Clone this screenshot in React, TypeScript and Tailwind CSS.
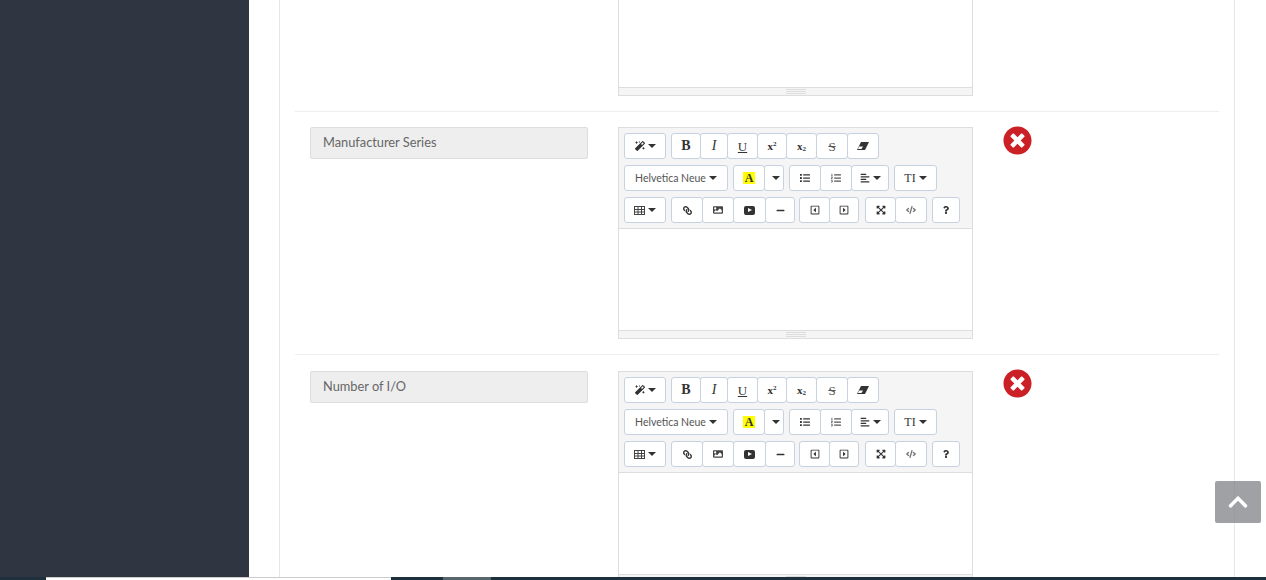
import type { ReactNode } from "react";
import {
  FaAlignLeft,
  FaChevronUp,
  FaCode,
  FaExpandArrowsAlt,
  FaImage,
  FaLink,
  FaList,
  FaListOl,
  FaMagic,
  FaMinus,
  FaQuestion,
  FaRegCaretSquareLeft,
  FaRegCaretSquareRight,
  FaTimesCircle,
} from "react-icons/fa";

function Caret() {
  return <span className="ml-[3px] inline-block border-x-[4px] border-t-[4px] border-x-transparent border-t-[#333]" />;
}

function Btn({ w, first, children }: { w: string; first?: boolean; children: ReactNode }) {
  return (
    <div
      className={`${w} ${first ? "" : "-ml-px"} flex h-[26px] shrink-0 items-center justify-center rounded-[3px] border border-[#c6d2e0] bg-white text-[#333]`}
    >
      {children}
    </div>
  );
}

function Serif({ className, children }: { className: string; children: ReactNode }) {
  return <span className={`font-['Liberation_Serif',serif] leading-none ${className}`}>{children}</span>;
}

function TableIcon() {
  return (
    <svg width="11" height="9" viewBox="0 0 11 9" fill="none" stroke="#444" strokeWidth="1">
      <rect x="0.5" y="0.5" width="10" height="8" />
      <path d="M0 3.5h11M0 6h11M4 0v9M7.5 0v9" />
    </svg>
  );
}

function EraserIcon() {
  return (
    <svg width="12" height="8" viewBox="0 0 12 8">
      <polygon points="4,0 12,0 8,8 0,8" fill="#333" />
      <polygon points="2,4.5 6,4.5 4.5,7 1,7" fill="#fff" />
    </svg>
  );
}

function Toolbar() {
  return (
    <div className="flex h-[101px] flex-col gap-[6px] border-b border-[#ddd] bg-[#f5f5f5] pl-[5px] pt-[5px]">
      <div className="flex">
        <Btn w="w-[42px]" first><FaMagic size={10} /><Caret /></Btn>
        <div className="ml-[5px] flex">
          <Btn w="w-[30px]" first><Serif className="text-[14px] font-bold">B</Serif></Btn>
          <Btn w="w-[28px]"><Serif className="text-[14px] italic">I</Serif></Btn>
          <Btn w="w-[31px]"><Serif className="text-[13px] underline">U</Serif></Btn>
          <Btn w="w-[30px]"><Serif className="text-[11px] font-bold">x<sup className="text-[7px]">2</sup></Serif></Btn>
          <Btn w="w-[31px]"><Serif className="text-[11px] font-bold">x<sub className="text-[7px]">2</sub></Serif></Btn>
          <Btn w="w-[32px]"><Serif className="text-[13px] text-[#555] line-through">S</Serif></Btn>
          <Btn w="w-[32px]"><EraserIcon /></Btn>
        </div>
      </div>
      <div className="flex">
        <Btn w="w-[104px]" first>
          <span className="pt-px font-['Lato',sans-serif] text-[10.5px] text-[#555]">Helvetica Neue</span>
          <Caret />
        </Btn>
        <div className="ml-[5px] flex">
          <Btn w="w-[32px]" first>
            <Serif className="bg-[#ff0] px-[2px] text-[12px] font-bold">A</Serif>
          </Btn>
          <Btn w="w-[20px]"><Caret /></Btn>
        </div>
        <div className="ml-[5px] flex">
          <Btn w="w-[32px]" first><FaList size={10} /></Btn>
          <Btn w="w-[32px]"><FaListOl size={10} className="text-[#555]" /></Btn>
          <Btn w="w-[38px]"><FaAlignLeft size={10} /><Caret /></Btn>
        </div>
        <div className="ml-[5px] flex">
          <Btn w="w-[43px]" first><Serif className="text-[12px]">TI</Serif><Caret /></Btn>
        </div>
      </div>
      <div className="flex">
        <Btn w="w-[42px]" first><TableIcon /><Caret /></Btn>
        <div className="ml-[5px] flex">
          <Btn w="w-[32px]" first><FaLink size={9} className="-scale-x-100" /></Btn>
          <Btn w="w-[32px]"><FaImage size={10} className="text-[#444]" /></Btn>
          <Btn w="w-[33px]">
            <span className="flex h-[9px] w-[11px] items-center justify-center rounded-[2px] bg-[#333]">
              <span className="border-y-[2.5px] border-l-[4px] border-y-transparent border-l-white" />
            </span>
          </Btn>
          <Btn w="w-[30px]"><FaMinus size={9} /></Btn>
        </div>
        <div className="ml-[4px] flex">
          <Btn w="w-[31px]" first><FaRegCaretSquareLeft size={10} /></Btn>
          <Btn w="w-[30px]"><FaRegCaretSquareRight size={10} /></Btn>
        </div>
        <div className="ml-[6px] flex">
          <Btn w="w-[31px]" first><FaExpandArrowsAlt size={10} /></Btn>
          <Btn w="w-[32px]"><FaCode size={10} className="text-[#777]" /></Btn>
        </div>
        <div className="ml-[5px] flex">
          <Btn w="w-[28px]" first><FaQuestion size={8} /></Btn>
        </div>
      </div>
    </div>
  );
}

function Statusbar() {
  return (
    <div className="flex h-[8px] shrink-0 justify-center border-t border-[#ddd] bg-[#f5f5f5] pt-px">
      <div className="flex h-[5px] w-[20px] flex-col justify-between">
        <div className="h-px bg-[#ddd]" />
        <div className="h-px bg-[#ddd]" />
        <div className="h-px bg-[#ddd]" />
      </div>
    </div>
  );
}

function Editor() {
  return (
    <div className="w-[355px] border border-[#ddd]">
      <Toolbar />
      <div className="h-[101px] bg-white" />
      <Statusbar />
    </div>
  );
}

function FieldRow({ label, pt, iconMt }: { label: string; pt: string; iconMt: string }) {
  return (
    <div className={`flex border-t border-[#eee] pb-[15px] ${pt}`}>
      <div className="ml-[15px] flex h-[32px] w-[278px] items-center rounded-[2px] border border-[#ddd] bg-[#eee] pl-[12px] font-['Lato',sans-serif] text-[12.8px] text-[#666]">
        {label}
      </div>
      <div className="ml-[30px]">
        <Editor />
      </div>
      <FaTimesCircle size={29} className={`ml-[29.5px] ${iconMt} text-[#cb2026]`} />
    </div>
  );
}

export default function App() {
  return (
    <div className="relative flex h-[580px] overflow-hidden bg-white">
      <aside className="w-[249px] shrink-0 bg-[#2f3541]" />
      <main className="flex-1 pl-[30px] pr-[31px]">
        <div className="h-full border-x border-[#e7e7e7] px-[15px]">
          <div className="flex pb-[15px]">
            <div className="ml-[323px] w-[355px] border-x border-b border-[#ddd]">
              <div className="h-[87px] bg-white" />
              <Statusbar />
            </div>
          </div>
          <FieldRow label="Manufacturer Series" pt="pt-[15px]" iconMt="-mt-px" />
          <FieldRow label="Number of I/O" pt="pt-[16px]" iconMt="-mt-[2px]" />
        </div>
      </main>

      <div className="absolute left-[1215px] top-[481px] flex h-[42px] w-[46px] items-center justify-center rounded-[2px] bg-[#7f8185]/75 text-white">
        <FaChevronUp size={22} />
      </div>

      <div className="absolute inset-x-0 bottom-0 flex h-[3px] bg-[#1e303c]">
        <div className="ml-[46px] w-[345px] border-t border-[#ccc] bg-white" />
        <div className="ml-[52px] w-[48px] bg-[#56666c]" />
      </div>
    </div>
  );
}
